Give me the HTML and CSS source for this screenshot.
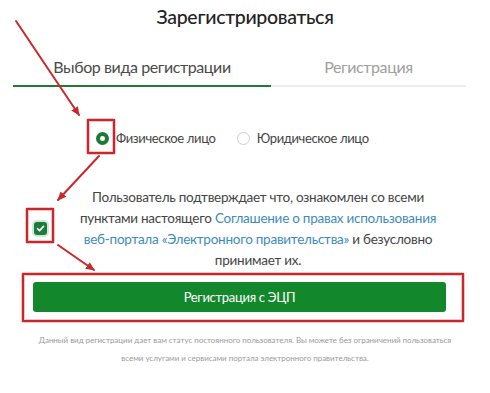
FILE: index.html
```html
<!DOCTYPE html>
<html lang="ru">
<head>
<meta charset="utf-8">
<title>Зарегистрироваться</title>
<link rel="stylesheet" href="styles.css">
</head>
<body>
<div class="page">
  <h1 class="title">Зарегистрироваться</h1>
  <div class="tabs">
    <div class="tab tab-active">Выбор вида регистрации</div>
    <div class="tab">Регистрация</div>
  </div>
  <div class="radios">
    <label class="radio-item"><span class="radio radio-on"></span><span>Физическое лицо</span></label>
    <label class="radio-item radio-item-2"><span class="radio"></span><span>Юридическое лицо</span></label>
  </div>
  <div class="agree">
    <span class="checkbox">
      <svg width="9" height="9" viewBox="0 0 9 9"><path d="M1.5 4.6 L3.6 6.6 L7.5 2.4" fill="none" stroke="#fff" stroke-width="1.6" stroke-linecap="round" stroke-linejoin="round"/></svg>
    </span>
    <p class="agree-text">Пользователь подтверждает что, ознакомлен со всеми пунктами настоящего <a class="link" href="#">Соглашение о правах использования</a> <a class="link" href="#">веб-портала «Электронного правительства»</a> и безусловно принимает их.</p>
  </div>
  <button class="btn" type="button">Регистрация с ЭЦП</button>
  <p class="note">Данный вид регистрации дает вам статус постоянного пользователя. Вы можете без ограничений пользоваться всеми услугами и сервисами портала электронного правительства.</p>

  <svg class="marks" width="490" height="393" viewBox="0 0 490 393">
    <defs>
      <marker id="ah" markerWidth="10" markerHeight="10" refX="8" refY="5" orient="auto" markerUnits="userSpaceOnUse">
        <path d="M0 1 L9 5 L0 9 Z" fill="#c8282c"/>
      </marker>
    </defs>
    <g fill="none" stroke="#f3c4c6" stroke-width="4">
      <rect x="88" y="120" width="26" height="33" rx="1"/>
      <rect x="27" y="209" width="26" height="33" rx="1"/>
      <rect x="23" y="274" width="440" height="47" rx="1"/>
    </g>
    <g fill="none" stroke="#c8282c" stroke-width="2">
      <rect x="88" y="120" width="26" height="33"/>
      <rect x="27" y="209" width="26" height="33"/>
      <rect x="23" y="274" width="440" height="47"/>
    </g>
    <g stroke="#c8282c" stroke-width="2" stroke-linecap="round">
      <line x1="16" y1="21" x2="79" y2="115" marker-end="url(#ah)"/>
      <line x1="99" y1="156" x2="58" y2="200" marker-end="url(#ah)"/>
      <line x1="58" y1="245" x2="94" y2="270" marker-end="url(#ah)"/>
    </g>
  </svg>
</div>
</body>
</html>
```
FILE: styles.css
```css
body {
  margin: 0;
  background: #fff;
  font-family: Lato, "Open Sans", sans-serif;
  color: #3a3a3a;
}
.page {
  position: relative;
  width: 490px;
  height: 393px;
  overflow: hidden;
}
.title {
  margin: 0;
  padding-top: 5px;
  text-align: center;
  font-size: 19.5px;
  line-height: 24px;
  font-weight: 500;
  letter-spacing: -0.3px;
  color: #222;
}
.tabs {
  display: grid;
  grid-template-columns: 258px 195px;
  margin: 27px 0 0 13px;
}
.tab {
  text-align: center;
  font-size: 16px;
  line-height: 22px;
  letter-spacing: -0.4px;
  padding-bottom: 7px;
  color: #a0a0a0;
  border-bottom: 2px solid #ececec;
}
.tab-active {
  color: #4a4a4a;
  border-bottom-color: #237a35;
}
.radios {
  display: flex;
  align-items: center;
  margin-top: 41px;
  padding-left: 96px;
  font-size: 13px;
  letter-spacing: -0.35px;
  line-height: 20px;
  color: #444;
}
.radio-item {
  display: flex;
  align-items: center;
  gap: 7px;
}
.radio-item-2 {
  margin-left: 21px;
}
.radio {
  box-sizing: border-box;
  width: 13px;
  height: 13px;
  border-radius: 50%;
  border: 1px solid #cfcfcf;
  background: #fff;
}
.radio-on {
  border: 4px solid #1b7a34;
}
.agree {
  display: flex;
  align-items: center;
  margin-top: 39px;
}
.checkbox {
  box-sizing: border-box;
  flex: none;
  width: 13px;
  height: 13px;
  margin-left: 34px;
  border-radius: 3px;
  background: #1c7a3a;
  box-shadow: 0 0 0 2px #cfe9d8;
  display: flex;
  align-items: center;
  justify-content: center;
  margin-top: -2px;
}
.agree-text {
  flex: none;
  margin: 0 0 0 23px;
  width: 376px;
  text-align: center;
  font-size: 13.5px;
  letter-spacing: -0.25px;
  line-height: 21px;
  color: #444;
}
.link {
  color: #3d8bbd;
  text-decoration: none;
}
.btn {
  display: block;
  margin: 11px 0 0 33px;
  width: 413px;
  height: 30px;
  border: 0;
  border-radius: 3px;
  background: #12872c;
  color: #fff;
  font-family: Lato, "Open Sans", sans-serif;
  font-size: 13px;
  letter-spacing: -0.3px;
  padding: 0;
}
.note {
  margin: 19px auto 0;
  width: 420px;
  text-align: center;
  font-size: 8px;
  letter-spacing: -0.03px;
  line-height: 18px;
  color: #9a9a9a;
}
.marks {
  position: absolute;
  left: 0;
  top: 0;
  pointer-events: none;
}
```
